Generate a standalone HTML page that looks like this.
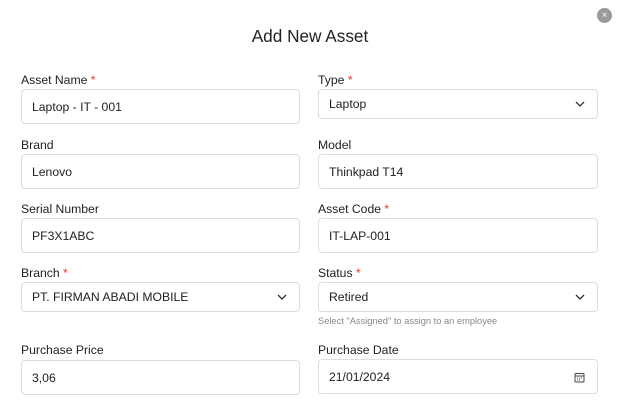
<!DOCTYPE html><html><head><style>
*{box-sizing:border-box;margin:0;padding:0}
body{width:620px;height:401px;background:#fff;font-family:"Liberation Sans",sans-serif;position:relative;overflow:hidden;color:#222}
.t{position:absolute;top:26px;left:0;width:620px;text-align:center;font-size:17.2px;color:#222}
.x{position:absolute;left:597px;top:8px;width:15px;height:15px;border-radius:50%;background:#9a9a9a;color:#fff;font-size:10px;line-height:15px;text-align:center}
.l{position:absolute;font-size:12.2px;color:#222}
.l b{color:#e33;font-weight:normal}
.i{position:absolute;border:1px solid #ddd;border-radius:4px;font-size:12.2px;padding-left:10px;display:flex;align-items:center}
.c{position:absolute;right:12px;top:50%;margin-top:-5px}
.h{position:absolute;font-size:9.3px;color:#888}
</style></head><body>
<div class="t">Add New Asset</div><div class="x">×</div>
<div class="l" style="left:21px;top:73px">Asset Name <b>*</b></div>
<div class="i" style="left:21px;top:89px;width:279px;height:35px">Laptop - IT - 001</div>
<div class="l" style="left:318px;top:73px">Type <b>*</b></div>
<div class="i" style="left:318px;top:89px;width:280px;height:30px">Laptop<svg class="c" width="10" height="10" viewBox="0 0 10 10"><path d="M1 3l4 4 4-4" fill="none" stroke="#333" stroke-width="1.3"/></svg></div>
<div class="l" style="left:21px;top:138px">Brand</div>
<div class="i" style="left:21px;top:154px;width:279px;height:35px">Lenovo</div>
<div class="l" style="left:318px;top:138px">Model</div>
<div class="i" style="left:318px;top:154px;width:280px;height:35px">Thinkpad T14</div>
<div class="l" style="left:21px;top:202px">Serial Number</div>
<div class="i" style="left:21px;top:218px;width:279px;height:35px">PF3X1ABC</div>
<div class="l" style="left:318px;top:202px">Asset Code <b>*</b></div>
<div class="i" style="left:318px;top:218px;width:280px;height:35px">IT-LAP-001</div>
<div class="l" style="left:21px;top:266px">Branch <b>*</b></div>
<div class="i" style="left:21px;top:282px;width:279px;height:30px">PT. FIRMAN ABADI MOBILE<svg class="c" width="10" height="10" viewBox="0 0 10 10"><path d="M1 3l4 4 4-4" fill="none" stroke="#333" stroke-width="1.3"/></svg></div>
<div class="l" style="left:318px;top:266px">Status <b>*</b></div>
<div class="i" style="left:318px;top:282px;width:280px;height:30px">Retired<svg class="c" width="10" height="10" viewBox="0 0 10 10"><path d="M1 3l4 4 4-4" fill="none" stroke="#333" stroke-width="1.3"/></svg></div>
<div class="h" style="left:318px;top:316px">Select "Assigned" to assign to an employee</div>
<div class="l" style="left:21px;top:343px">Purchase Price</div>
<div class="i" style="left:21px;top:360px;width:279px;height:35px">3,06</div>
<div class="l" style="left:318px;top:343px">Purchase Date</div>
<div class="i" style="left:318px;top:359px;width:280px;height:35px">21/01/2024<svg class="c" width="11" height="11" viewBox="0 0 11 11"><rect x="1" y="1.5" width="9" height="8.5" rx="1" fill="none" stroke="#444"/><path d="M1 4h9M3 6h1M5 6h1M7 6h1M3 8h1M5 8h1" stroke="#444"/></svg></div>
</body></html>
